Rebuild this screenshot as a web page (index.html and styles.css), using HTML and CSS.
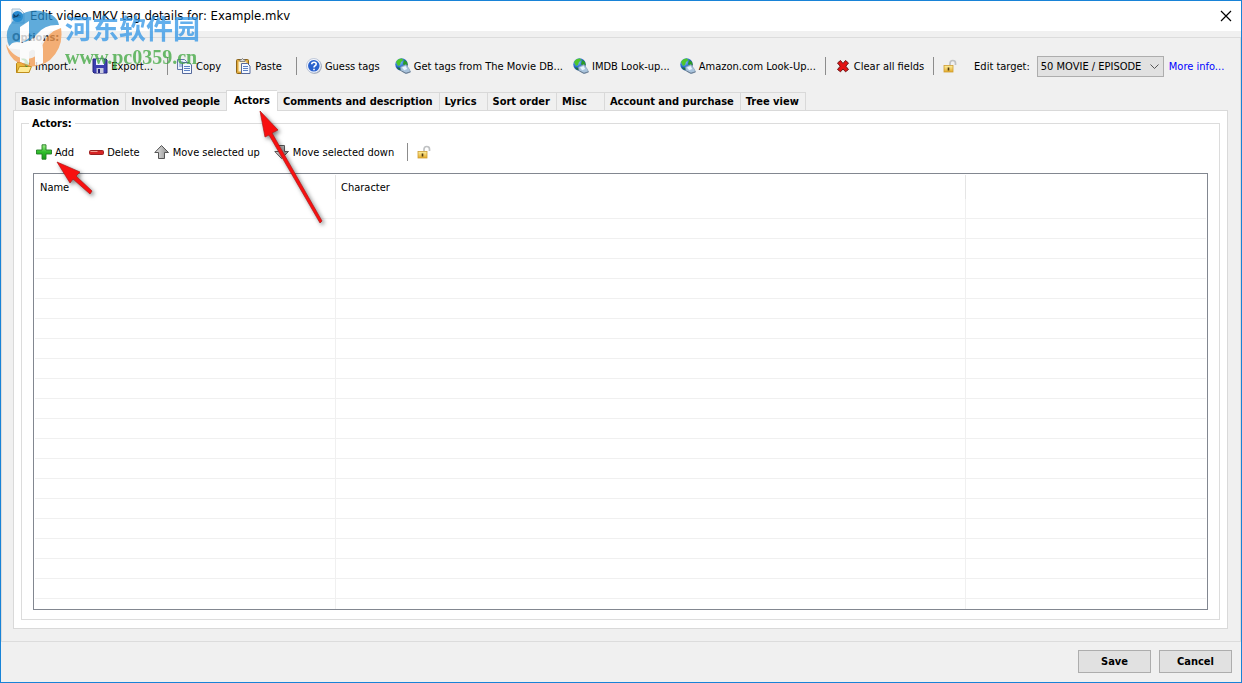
FILE: index.html
```html
<!DOCTYPE html>
<html lang="en">
<head>
  <meta charset="UTF-8">
  <meta name="viewport" content="width=device-width, initial-scale=1.0">
  <title>Edit video MKV tag details for: Example.mkv</title>
  <link rel="stylesheet" href="styles.css">
</head>
<body>
  <!-- shared icons -->
  <svg class="sprite" width="0" height="0">
    <defs>
      <linearGradient id="g-up" x1="0" x2="1"><stop offset="0" stop-color="#e8e8e8"/><stop offset="1" stop-color="#8d8d8d"/></linearGradient>
      <linearGradient id="g-green" x1="0" y1="0" x2="0" y2="1"><stop offset="0" stop-color="#a5ee8c"/><stop offset=".5" stop-color="#2fbe2b"/><stop offset="1" stop-color="#159b17"/></linearGradient>
      <linearGradient id="g-gold" x1="0" y1="0" x2="0" y2="1"><stop offset="0" stop-color="#fdf0a0"/><stop offset="1" stop-color="#e3a928"/></linearGradient>
      <radialGradient id="g-globe" cx=".35" cy=".3" r=".75"><stop offset="0" stop-color="#8fd0ff"/><stop offset=".5" stop-color="#2d74cf"/><stop offset="1" stop-color="#0c2f7c"/></radialGradient>
    </defs>
    <symbol id="i-globe" viewBox="0 0 16 16">
      <circle cx="6.500" cy="6.500" r="6.200" fill="url(#g-globe)"/>
      <path d="M1 4Q3 .6 7 .6L8.500 2 6 4 5 7 3 8Z" fill="#4fc62c"/>
      <path d="M9 2l3 2 .6 3-2.600 1L8 6Z" fill="#2a9d27"/>
      <path d="M2 9l3 1 1 2.500Q3 11.800 2 9Z" fill="#1d7a35"/>
      <path d="M5.500 9l5.500-2.500 3.500 5 1 2.500-4.500 1.800-5-3Z" fill="#a9c3dc" stroke="#8097ae" stroke-width=".6"/>
      <path d="M7 9.500l3.500-1.600 1.700 3-3 1.400Z" fill="#e8f4ff"/>
      <path d="M6.500 13l4.500 2.200 4.500-1.400" fill="none" stroke="#66788c" stroke-width=".9"/>
    </symbol>
    <symbol id="i-lock" viewBox="0 0 16 16">
      <path d="M7 7V5.500Q7 2.500 9.700 2.500T12.500 5v2" fill="none" stroke="#bfc1c3" stroke-width="1.700"/>
      <rect x="1" y="7.500" width="9" height="6.500" fill="url(#g-gold)" stroke="#cf9d33" stroke-width=".8"/>
      <rect x="4.700" y="9.500" width="1.600" height="3" fill="#4e3a12"/>
    </symbol>
  </svg>

  <div class="window">
    <header class="titlebar">
      <svg class="app-icon" width="16" height="16" viewBox="0 0 16 16"><path d="M2 1h8l4 4v10H2Z" fill="#e2eef7" stroke="#a7bfd2"/><circle cx="7.500" cy="8.500" r="5.500" fill="#2b8bd0"/><path d="M4 10V7l2 2 2-2v3M10 7v3" fill="none" stroke="#123f66" stroke-width="1.200"/></svg>
      <h1 class="title">Edit video MKV tag details for: Example.mkv</h1>
      <button class="close" aria-label="Close"><svg width="12" height="12" viewBox="0 0 12 12"><path d="M1 1l10 10M11 1L1 11" stroke="#000" stroke-width="1.200"/></svg></button>
    </header>

    <fieldset class="options">
      <legend class="options-legend">Options:</legend>

      <div class="toolbar">
        <button class="tool"><svg class="icon" viewBox="0 0 16 16"><path d="M.500 14.500V5.500l1-1h4l1.500 1.500h6v8.500Z" fill="#e9b93d" stroke="#b78413"/><path d="M.800 14.500L3.500 8.500H15.500L13 14.500Z" fill="#ffeb95" stroke="#c08f1c"/><path d="M5.500 1q6-1 6 4h2.500L10.500 9 7.500 5H9.500Q9.500 2 5.500 1Z" fill="#55b947" stroke="#2b8330" stroke-width=".6"/></svg>Import...</button>
        <button class="tool"><svg class="icon" viewBox="0 0 16 16"><path d="M1 1h13l1 1v13H2l-1-1Z" fill="#3c3fb0" stroke="#22247e"/><path d="M4 1h8v6H4Z" fill="#eef0ff"/><path d="M4.500 10h7v5h-7Z" fill="#c9cbe0"/><path d="M6 11h2v4H6Z" fill="#22247e"/></svg>Export...</button>
        <span class="separator"></span>
        <button class="tool"><svg class="icon" viewBox="0 0 16 16"><path d="M.500 1.500h7l2 2v8h-9Z" fill="#eaf1fc" stroke="#6478a8"/><path d="M2 4h4M2 6h4M2 8h4" stroke="#6d8fc9"/><path d="M5.500 4.500h6.500l2.500 2.500v8.500h-9Z" fill="#f4f8ff" stroke="#55699c"/><path d="M7 8.500h6M7 10.500h6M7 12.500h6" stroke="#5c82c4"/></svg>Copy</button>
        <button class="tool"><svg class="icon" viewBox="0 0 16 16"><rect x=".5" y="1.500" width="12" height="14" rx="1" fill="#dfa83b" stroke="#8d6518"/><rect x="2.500" y="3.500" width="8" height="10" fill="#fdf3d2"/><path d="M4 3.500V1.500h1.500Q6.500-.5 7.500 1.500H9v2Z" fill="#d8d8d8" stroke="#666" stroke-width=".7"/><path d="M5.500 5.500h6l2.500 2.500v7.500h-8.500Z" fill="#f4f8ff" stroke="#55699c"/><path d="M7 8.500h5M7 10.500h5M7 12.500h5" stroke="#5c82c4"/></svg>Paste</button>
        <span class="separator"></span>
        <button class="tool"><svg class="icon" viewBox="0 0 16 16"><circle cx="8.500" cy="8.500" r="7.300" fill="#9ba3b2"/><circle cx="7.800" cy="7.800" r="7.300" fill="#f5f8ff" stroke="#a8b4cc" stroke-width=".7"/><circle cx="7.800" cy="7.800" r="5.800" fill="#2a62cd"/><path d="M5.700 6.200Q5.800 4.200 8 4.200t2.200 1.900Q10.200 7.300 8.800 8 8 8.500 8 9.500M8 10.700v1.500" fill="none" stroke="#fff" stroke-width="1.600"/></svg>Guess tags</button>
        <button class="tool lookup"><svg class="icon"><use href="#i-globe"/></svg>Get tags from The Movie DB...</button>
        <button class="tool lookup"><svg class="icon"><use href="#i-globe"/></svg>IMDB Look-up...</button>
        <button class="tool lookup"><svg class="icon"><use href="#i-globe"/></svg>Amazon.com Look-Up...</button>
        <span class="separator"></span>
        <button class="tool lookup"><svg class="icon" viewBox="0 0 16 16"><path d="M2.500 5L5.500 2.500 8 5.500 10.500 2.500 13.500 5 10.800 8.200 13.500 11.500 10.500 13.800 8 11 5.500 13.800 2.500 11.500 5.200 8.200Z" fill="#e41212" stroke="#6d1717"/></svg>Clear all fields</button>
        <span class="separator"></span>
        <button class="tool" aria-label="Lock tags"><svg class="icon"><use href="#i-lock"/></svg></button>
        <label class="target-label" for="target">Edit target:</label>
        <span class="select-box">
          <select id="target" class="target">
            <option>50 MOVIE / EPISODE</option>
          </select>
          <svg class="chevron" width="9" height="6" viewBox="0 0 9 6"><path d="M.500 .500L4.500 4.500 8.500 .500" fill="none" stroke="#555"/></svg>
        </span>
        <a class="more" href="#">More info...</a>
      </div>

      <nav class="tabs">
        <button class="tab">Basic information</button>
        <button class="tab">Involved people</button>
        <button class="tab active">Actors</button>
        <button class="tab">Comments and description</button>
        <button class="tab">Lyrics</button>
        <button class="tab">Sort order</button>
        <button class="tab">Misc</button>
        <button class="tab">Account and purchase</button>
        <button class="tab">Tree view</button>
      </nav>

      <div class="panel">
        <fieldset class="group">
          <legend class="group-legend">Actors:</legend>
          <div class="toolbar">
            <button class="tool"><svg class="icon" viewBox="0 0 16 16"><path d="M6 .800h4v5.200h5.500v4h-5.500v5.200h-4v-5.200h-5.500v-4h5.500Z" fill="url(#g-green)" stroke="#237d25" stroke-width=".9"/></svg>Add</button>
            <button class="tool"><svg class="icon" viewBox="0 0 16 16"><rect x="1.500" y="6.500" width="14" height="4" rx="1" fill="#d62525" stroke="#9b2020"/><path d="M2.500 7.500h7" stroke="#f29a8d"/></svg>Delete</button>
            <button class="tool"><svg class="icon" viewBox="0 0 16 16"><path d="M7.500 1.500L14.500 8.500H10.500V14.500H4.500V8.500H.800Z" fill="url(#g-up)" stroke="#555"/></svg>Move selected up</button>
            <button class="tool"><svg class="icon" viewBox="0 0 16 16"><path d="M7.500 14.500L14.500 7.500H10.500V1.500H4.500V7.500H.800Z" fill="url(#g-up)" stroke="#555"/></svg>Move selected down</button>
            <span class="separator"></span>
            <button class="tool" aria-label="Lock actors"><svg class="icon"><use href="#i-lock"/></svg></button>
          </div>
          <div class="list">
            <table class="grid">
              <colgroup><col class="col-name"><col class="col-character"><col></colgroup>
              <thead>
                <tr><th>Name</th><th>Character</th><th></th></tr>
              </thead>
              <tbody id="rows"></tbody>
            </table>
          </div>
        </fieldset>
      </div>
    </fieldset>

    <footer class="footer">
      <button class="action">Save</button>
      <button class="action">Cancel</button>
    </footer>
  </div>

  <div class="watermark">
    <svg class="watermark-logo" width="58" height="60" viewBox="0 0 58 60">
      <path d="M1 36Q8 50 22 51 34 50 38 36 43 24 56 20 59 39 45 52 27 65 9 52 2 45 1 36Z" fill="#f5994c"/>
      <path d="M5 40Q-4 22 12 9 28-3 47 7 53 11 54 17 40 16 32 26 24 36 12 34 5 34 5 40Z" fill="#2a8fd0"/>
      <path d="M3 40Q6 34 14 35 26 35 33 26 40 18 55 18 44 22 39 31 33 42 20 42 9 41 3 40Z" fill="#fff"/>
      <path d="M15 19l9-6v17q-4 4-9 5ZM15 38l9-1v20l-9-3ZM24 37q14-6 14 4v14q-5 3-8 2V43q-2-3-6 1Z" fill="#fff"/>
    </svg>
    <div class="watermark-text">
      <span class="watermark-name" lang="zh">河东软件园</span>
      <span class="watermark-site">www.pc0359.cn</span>
    </div>
  </div>

  <svg class="arrows" width="340" height="240" viewBox="0 0 340 240">
    <path d="M57 162L80 172 76 176 92 191 90 194 73 179 70 183Z"/>
    <path d="M260 111L278 130 272 133 322 221 320 223 269 135 265 137Z"/>
  </svg>

  <script>
    // empty rows of the list
    const rows = document.getElementById('rows');
    for (let i = 0; i < 21; i++) {
      rows.insertAdjacentHTML('beforeend', '<tr><td></td><td></td><td></td></tr>');
    }
  </script>
</body>
</html>
```
FILE: styles.css
```css
* {
  box-sizing: border-box;
}

body {
  margin: 0;
  font-family: 'DejaVu Sans Condensed', 'Noto Sans', sans-serif;
  font-size: 11px;
  line-height: 13px;
  color: #000;
}

button,
select {
  font: inherit;
  color: inherit;
}

svg {
  display: block;
}

.sprite {
  position: absolute;
}

.window {
  height: 100vh;
  display: flex;
  flex-direction: column;
  background: #f0f0f0;
  border: 1px solid #1883d7;
}

.titlebar {
  flex: none;
  height: 30px;
  display: flex;
  align-items: center;
  gap: 4px;
  padding: 0 9px;
  background: #fff;
}

.title {
  flex: 1;
  margin: 0;
  font-size: 13px;
  font-weight: normal;
  line-height: 16px;
}

.close {
  padding: 0;
  border: none;
  background: none;
}

.options {
  flex: 1;
  min-height: 0;
  min-width: 0;
  display: flex;
  flex-direction: column;
  margin: 0;
  padding: 10px 12px 12px 11px;
  border: 1px solid #dcdcdc;
}

.options-legend {
  margin-left: -3px;
  padding: 0 2px;
  font-weight: bold;
  color: #333;
}

.toolbar {
  flex: none;
  height: 24px;
  display: flex;
  align-items: center;
  padding-left: 3px;
  white-space: nowrap;
}

.tool {
  flex: none;
  display: flex;
  align-items: center;
  gap: 3px;
  margin-right: 15px;
  padding: 0;
  border: none;
  background: none;
}

.lookup {
  margin-right: 10px;
}

.icon {
  width: 16px;
  height: 16px;
}

.separator {
  flex: none;
  width: 1px;
  height: 18px;
  margin: 0 9px 0 -1px;
  background: #8c8c8c;
}

.target-label {
  margin-right: 7px;
}

.select-box {
  position: relative;
}

.target {
  display: block;
  width: 127px;
  height: 21px;
  padding: 0 3px;
  appearance: none;
  border: 1px solid #adadad;
  border-radius: 0;
  background: #e1e1e1;
}

.chevron {
  position: absolute;
  top: 8px;
  right: 5px;
  pointer-events: none;
}

.more {
  margin-left: 5px;
  color: #00f;
  text-decoration: none;
}

.tabs {
  flex: none;
  display: flex;
  align-items: flex-end;
  margin-top: 12px;
  padding-left: 2px;
}

.tab {
  height: 18px;
  min-width: 48px;
  padding: 0 6px 0 5px;
  border: 1px solid #d9d9d9;
  border-width: 1px 0 0 1px;
  background: #f0f0f0;
  font-weight: bold;
  text-align: left;
  white-space: nowrap;
}

.tab:last-child {
  border-right-width: 1px;
}

.tab.active {
  position: relative;
  height: 21px;
  margin-bottom: -1px;
  padding: 0 7px 2px;
  background: #fff;
}

.panel {
  flex: 1;
  min-height: 0;
  display: flex;
  padding: 6px 7px 8px;
  border: 1px solid #d9d9d9;
  background: #fff;
}

.group {
  flex: 1;
  min-width: 0;
  display: flex;
  flex-direction: column;
  margin: 0;
  padding: 10px 11px 9px;
  border: 1px solid #dcdcdc;
}

.group .tool {
  margin-right: 14px;
}

.group-legend {
  margin-left: -4px;
  padding: 0 3px;
  font-weight: bold;
}

.list {
  flex: 1;
  min-height: 0;
  margin-top: 9px;
  padding: 1px;
  overflow: hidden;
  border: 1px solid #828790;
}

.grid {
  width: 100%;
  table-layout: fixed;
  border-collapse: separate;
  border-spacing: 0;
}

.col-name {
  width: 301px;
}

.col-character {
  width: 630px;
}

.grid th {
  height: 24px;
  padding: 0 5px;
  border-right: 1px solid #e5e5e5;
  font-weight: normal;
  text-align: left;
}

.grid td {
  height: 20px;
  padding: 0;
  border-right: 1px solid #f0f0f0;
  border-bottom: 1px solid #f0f0f0;
}

.grid th:last-child,
.grid td:last-child {
  border-right: none;
}

.footer {
  flex: none;
  display: flex;
  justify-content: flex-end;
  gap: 8px;
  padding: 8px 9px 9px;
}

.action {
  width: 73px;
  height: 23px;
  padding: 0;
  border: 1px solid #adadad;
  background: #e1e1e1;
  font-weight: bold;
}

/* site mark over the top left corner */
.watermark {
  position: absolute;
  top: 8px;
  left: 5px;
  display: flex;
  gap: 2px;
  opacity: .75;
  pointer-events: none;
}

.watermark-text {
  display: flex;
  flex-direction: column;
}

.watermark-name {
  font-family: 'Noto Sans CJK SC', sans-serif;
  font-size: 27px;
  font-weight: bold;
  line-height: 40px;
  color: #2f95e6;
}

.watermark-site {
  font-family: 'Liberation Serif', serif;
  font-size: 20px;
  font-weight: bold;
  line-height: 18px;
  color: #3da63d;
}

.arrows {
  position: absolute;
  top: 0;
  left: 0;
  fill: #f81010;
  stroke: #b01818;
  stroke-width: .7;
  filter: drop-shadow(2px 2px 2px rgba(0, 0, 0, .5));
  pointer-events: none;
}
```
